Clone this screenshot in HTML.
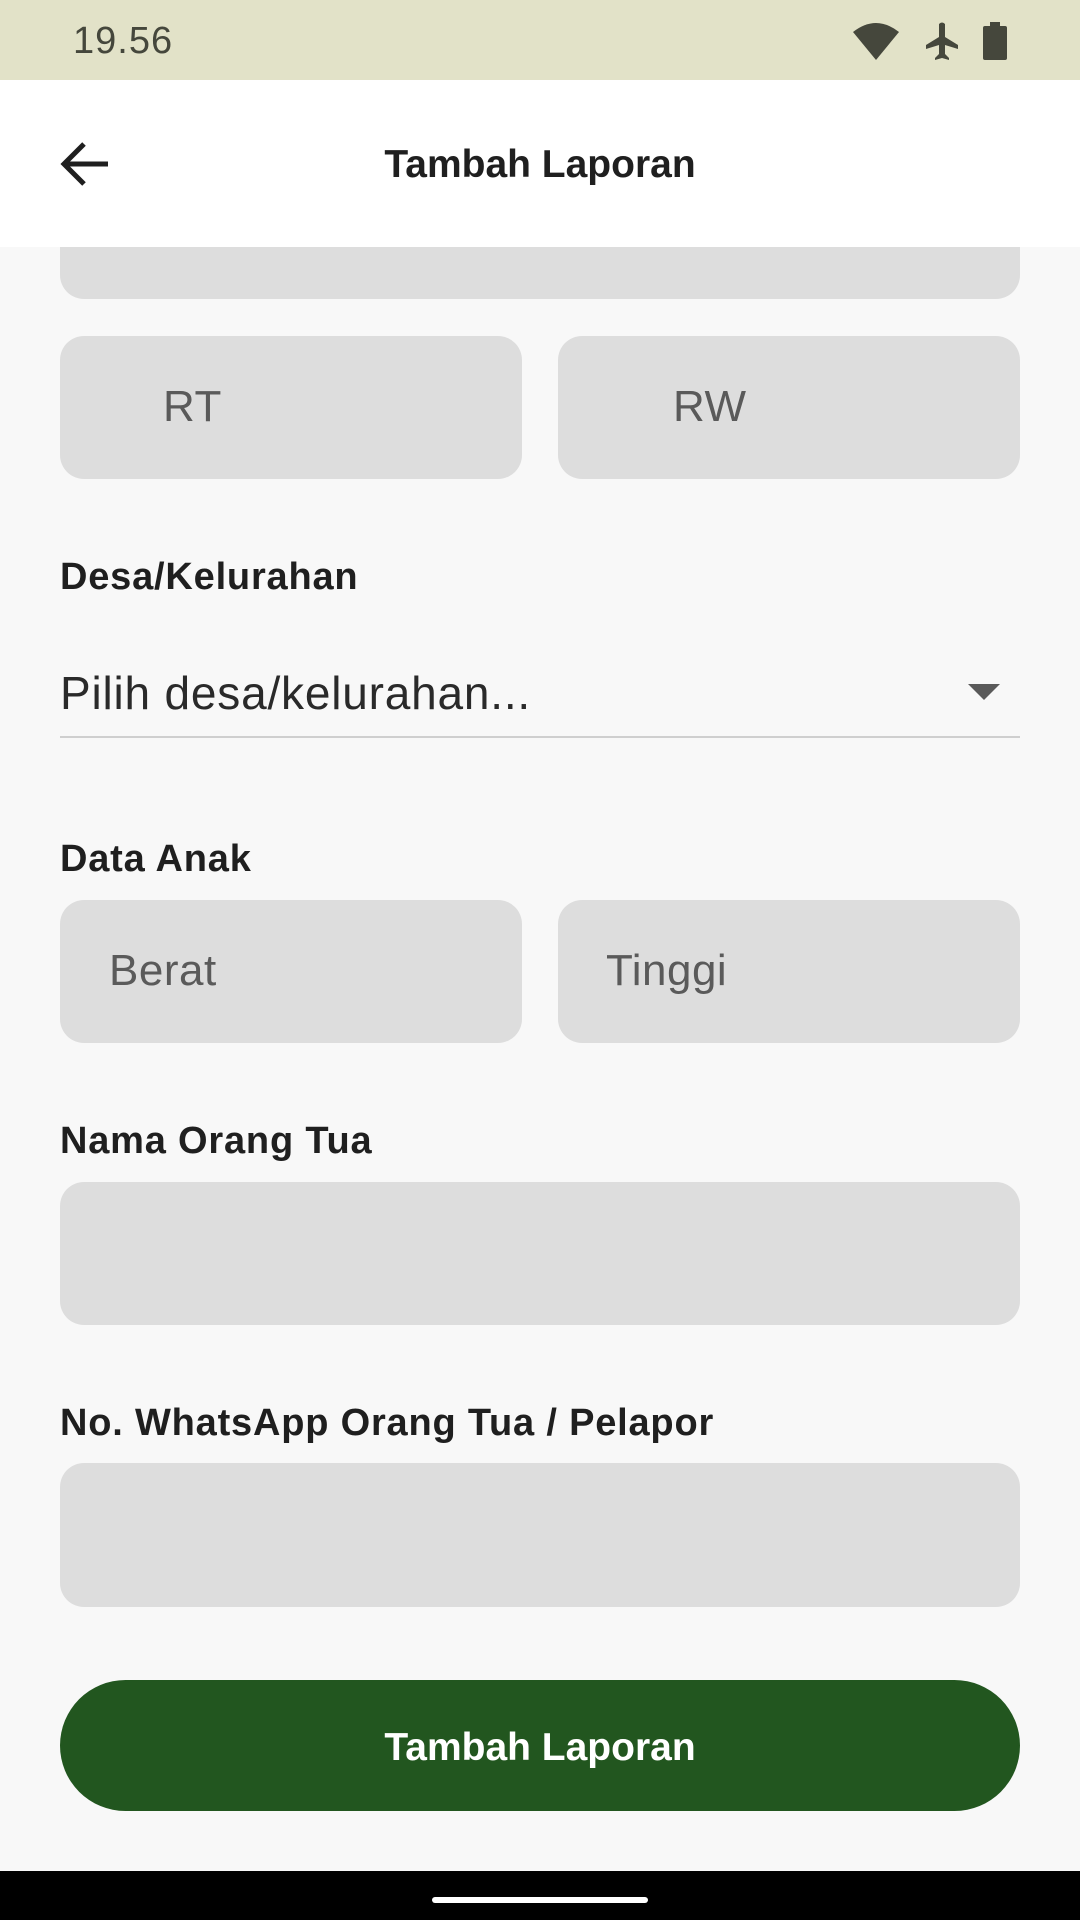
<!DOCTYPE html>
<html><head><meta charset="utf-8"><style>
*{margin:0;padding:0;box-sizing:border-box}
body{width:1080px;height:1920px;background:#f8f8f8;font-family:"Liberation Sans",Roboto,sans-serif;position:relative;overflow:hidden;color:#1f1f1f}
.abs{position:absolute}
.status{left:0;top:0;width:1080px;height:80px;background:#e2e2c8}
.time{left:73px;top:20px;font-size:38px;color:#45473c;letter-spacing:1px}
.title{left:0;width:1080px;text-align:center;top:143px;font-size:39px;font-weight:bold;color:#1f1f1f}
.field{background:#dddddd;border-radius:24px}
.ph{font-size:44px;color:#5a5a5a;letter-spacing:0.5px}
.label{left:60px;font-size:38px;font-weight:bold;color:#1f1f1f;letter-spacing:0.8px}
</style></head><body>
<div class="abs status"></div>
<div class="abs time">19.56</div>
<svg class="abs" style="left:850px;top:20px" width="160" height="42" viewBox="0 0 160 42">
<path d="M3 12 Q26 -6 49 12 L26 40 Z" fill="#45473c"/>
<path d="M89 4 Q92 1 95 4 L95 17 L108 25 L108 29 L95 25 L95 34 L99 38 L99 40 L92 38 L85 40 L85 38 L89 34 L89 25 L76 29 L76 25 L89 17 Z" fill="#45473c"/>
<rect x="133" y="6" width="24" height="34" rx="2" fill="#45473c"/><rect x="140" y="2" width="10" height="5" fill="#45473c"/>
</svg>

<div class="abs field" style="left:60px;top:220px;width:960px;height:79px;border-radius:0 0 24px 24px"></div>
<div class="abs" style="left:0;top:80px;width:1080px;height:167px;background:#fff"></div>
<div class="abs title">Tambah Laporan</div>
<svg class="abs" style="left:58px;top:140px" width="52" height="48" viewBox="0 0 52 48"><path d="M50 24 H6 M26 4 L6 24 L26 44" stroke="#1f1f1f" stroke-width="5" fill="none"/></svg>

<div class="abs field" style="left:60px;top:336px;width:462px;height:143px"></div>
<div class="abs field" style="left:558px;top:336px;width:462px;height:143px"></div>
<div class="abs ph" style="left:163px;top:382px">RT</div>
<div class="abs ph" style="left:673px;top:382px">RW</div>

<div class="abs label" style="top:556px">Desa/Kelurahan</div>
<div class="abs" style="left:60px;top:666px;font-size:46px;color:#2a2a2a;letter-spacing:0.8px">Pilih desa/kelurahan...</div>
<svg class="abs" style="left:968px;top:684px" width="32" height="16"><path d="M0 0 H32 L16 16Z" fill="#5a5a5a"/></svg>
<div class="abs" style="left:60px;top:736px;width:960px;height:2px;background:#cfcfcf"></div>

<div class="abs label" style="top:838px">Data Anak</div>
<div class="abs field" style="left:60px;top:900px;width:462px;height:143px"></div>
<div class="abs field" style="left:558px;top:900px;width:462px;height:143px"></div>
<div class="abs ph" style="left:109px;top:946px">Berat</div>
<div class="abs ph" style="left:606px;top:946px">Tinggi</div>

<div class="abs label" style="top:1120px">Nama Orang Tua</div>
<div class="abs field" style="left:60px;top:1182px;width:960px;height:143px"></div>

<div class="abs label" style="top:1402px">No. WhatsApp Orang Tua / Pelapor</div>
<div class="abs field" style="left:60px;top:1463px;width:960px;height:144px"></div>

<div class="abs" style="left:60px;top:1680px;width:960px;height:131px;border-radius:66px;background:#22561f;color:#fff;font-size:39px;font-weight:bold;text-align:center;line-height:135px">Tambah Laporan</div>

<div class="abs" style="left:0;top:1871px;width:1080px;height:49px;background:#000"></div>
<div class="abs" style="left:432px;top:1897px;width:216px;height:6px;border-radius:3px;background:#fff"></div>
</body></html>
